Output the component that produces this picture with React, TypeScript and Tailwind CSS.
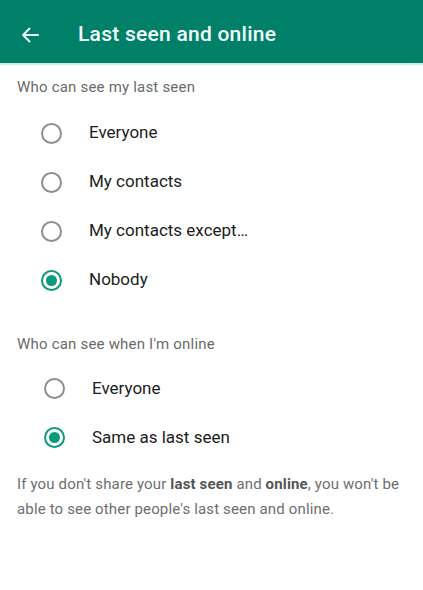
import React from "react";

function Radio({ checked }: { checked?: boolean }) {
  return checked ? (
    <div className="w-[21px] h-[21px] rounded-full border-2 border-[#0b9a7b] flex items-center justify-center shrink-0">
      <div className="w-[11px] h-[11px] rounded-full bg-[#0b9a7b]" />
    </div>
  ) : (
    <div className="w-[21px] h-[21px] rounded-full border-2 border-[#8e8e8e] shrink-0" />
  );
}

function Option({ label, checked, indent }: { label: string; checked?: boolean; indent: string }) {
  return (
    <div className={`flex items-center h-[49px] ${indent}`}>
      <Radio checked={checked} />
      <span className="ml-[27px] text-[17px] text-[#1c1c1c]">{label}</span>
    </div>
  );
}

export default function App() {
  return (
    <div className="w-[423px] h-[590px] bg-white" style={{ fontFamily: "Roboto, 'Noto Sans', sans-serif" }}>
      <div className="h-[63px] bg-[#008069] flex items-center pt-[6px]">
        <svg width="18" height="16" viewBox="0 0 18 16" className="ml-[21px]">
          <path d="M17 8H2M8.5 1.5L2 8l6.5 6.5" stroke="#e9fbf6" strokeWidth="2" fill="none" strokeLinecap="round" strokeLinejoin="round" />
        </svg>
        <span className="ml-[39px] text-[21px] font-medium text-[#f2fdf9] tracking-[0.25px]">Last seen and online</span>
      </div>
      <div className="h-[2px] bg-[#c9f0e6]" />
      <div className="pl-[17px] pt-[11px] text-[15px] text-[#6a6a6a] tracking-[0.2px]">Who can see my last seen</div>
      <div className="pt-[10px]">
        <Option label="Everyone" indent="pl-[41px]" />
        <Option label="My contacts" indent="pl-[41px]" />
        <Option label="My contacts except…" indent="pl-[41px]" />
        <Option label="Nobody" checked indent="pl-[41px]" />
      </div>
      <div className="pl-[17px] pt-[28px] text-[15px] text-[#6a6a6a] tracking-[0.2px]">Who can see when I'm online</div>
      <div className="pt-[9px]">
        <Option label="Everyone" indent="pl-[44px]" />
        <Option label="Same as last seen" checked indent="pl-[44px]" />
      </div>
      <p className="pl-[17px] pr-[10px] pt-[10px] text-[15px] leading-[25px] text-[#6e6e6e] tracking-[0.15px]">
        If you don't share your <b className="font-bold text-[#555]">last seen</b> and <b className="font-bold text-[#555]">online</b>, you won't be able to see other people's last seen and online.
      </p>
    </div>
  );
}
